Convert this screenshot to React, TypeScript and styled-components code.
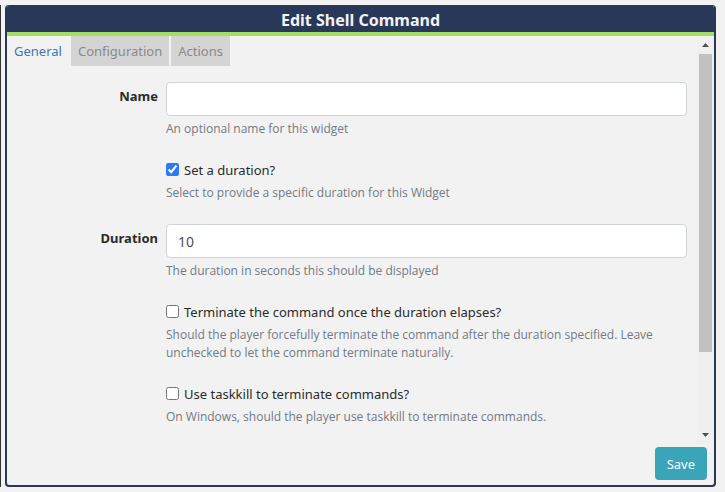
import React, { useState } from "react";
import styled, { createGlobalStyle } from "styled-components";

const GlobalStyle = createGlobalStyle`
  *, *::before, *::after { box-sizing: border-box; }
  body {
    margin: 0;
    background: #f2f2f2;
    color: #2b2b2b;
    font: 13px/20px "Noto Sans", "Open Sans", sans-serif;
  }
`;

const Page = styled.div`
  display: flex;
  gap: 4px;
  padding: 5px 9px 5px 0;
`;

const NeighbourEdge = styled.div`
  width: 1px;
  flex: none;
  background: #333;
`;

const Panel = styled.form`
  flex: 1;
  min-width: 0;
  border: 2px solid #293858;
  border-top: 0;
  border-radius: 4px;
  overflow: hidden;
`;

const Title = styled.h1`
  margin: 0;
  padding-bottom: 1px;
  padding-top: 5px;
  background: #293858;
  color: #f2f2f2;
  font-size: 16px;
  font-weight: 700;
  line-height: 21px;
  text-align: center;
`;

const Body = styled.div`
  display: flex;
  border-top: 4px solid #a6dd66;
`;

const Content = styled.div`
  flex: 1;
  min-width: 0;
  padding-bottom: 18px;
`;

const Tabs = styled.nav`
  display: flex;
  gap: 2px;
  margin-bottom: 16px;
`;

const Tab = styled.a<{ $active?: boolean }>`
  padding: 5px 7px;
  background: ${(p) => (p.$active ? "transparent" : "#d4d4d4")};
  color: ${(p) => (p.$active ? "#3c78b4" : "#8a8a8a")};
  text-decoration: none;
`;

const Fields = styled.div`
  display: grid;
  gap: 22px;
  padding-right: 10px;
`;

const Row = styled.div`
  display: grid;
  grid-template-columns: 151px 1fr;
  column-gap: 8px;
`;

const Label = styled.label`
  padding-top: 4px;
  font-weight: 700;
  text-align: right;
`;

const Control = styled.div`
  grid-column: 2;
  min-width: 0;
`;

const TextInput = styled.input`
  display: block;
  width: 100%;
  height: 34px;
  padding: 0 11px;
  border: 1px solid #ced4da;
  border-radius: 4px;
  background: #fff;
  color: #495057;
  font: inherit;
  font-size: 14px;
`;

const CheckLabel = styled.label`
  display: flex;
  align-items: center;
  gap: 5px;
`;

const CheckBox = styled.input`
  width: 13px;
  height: 13px;
  margin: 0 0 2px;
  accent-color: #2b7bf6;
`;

const Help = styled.p`
  margin: 4px 0 0;
  color: #727a82;
  font-family: "Open Sans", "Noto Sans", sans-serif;
  font-size: 12px;
  line-height: 18px;
`;

const ScrollBar = styled.div`
  display: flex;
  flex-direction: column;
  align-items: center;
  width: 17px;
  flex: none;
  background: #f0f0f0;
`;

const Arrow = styled.svg`
  display: block;
  width: 17px;
  height: 18px;
  flex: none;
  fill: #505050;
`;

const Track = styled.div`
  flex: 1;
  width: 13px;
`;

const Thumb = styled.div`
  height: 80%;
  background: #c1c1c1;
`;

const Footer = styled.footer`
  display: flex;
  justify-content: flex-end;
  padding: 3px 7px 5px;
`;

const SaveButton = styled.button`
  height: 33px;
  padding: 0 12px;
  border: 0;
  border-radius: 4px;
  background: #3aa5b8;
  color: #fff;
  font: inherit;
`;

type FieldProps = { id: string; label: string; help: string; value?: string };

function TextField({ id, label, help, value = "" }: FieldProps) {
  const [text, setText] = useState(value);
  return (
    <Row>
      <Label htmlFor={id}>{label}</Label>
      <Control>
        <TextInput id={id} type="text" value={text} onChange={(e) => setText(e.target.value)} />
        <Help>{help}</Help>
      </Control>
    </Row>
  );
}

type CheckProps = { id: string; label: string; help: string; checked?: boolean };

function CheckField({ id, label, help, checked }: CheckProps) {
  return (
    <Row>
      <Control>
        <CheckLabel htmlFor={id}>
          <CheckBox id={id} type="checkbox" defaultChecked={checked} />
          {label}
        </CheckLabel>
        <Help>{help}</Help>
      </Control>
    </Row>
  );
}

export default function App() {
  return (
    <>
      <GlobalStyle />
      <Page>
        <NeighbourEdge />
        <Panel onSubmit={(e) => e.preventDefault()}>
          <Title>Edit Shell Command</Title>
          <Body>
            <Content>
              <Tabs>
                <Tab href="#general" $active>General</Tab>
                <Tab href="#configuration">Configuration</Tab>
                <Tab href="#actions">Actions</Tab>
              </Tabs>
              <Fields>
                <TextField id="name" label="Name" help="An optional name for this widget" />
                <CheckField
                  id="useDuration"
                  label="Set a duration?"
                  help="Select to provide a specific duration for this Widget"
                  checked
                />
                <TextField
                  id="duration"
                  label="Duration"
                  value="10"
                  help="The duration in seconds this should be displayed"
                />
                <CheckField
                  id="terminate"
                  label="Terminate the command once the duration elapses?"
                  help="Should the player forcefully terminate the command after the duration specified. Leave unchecked to let the command terminate naturally."
                />
                <CheckField
                  id="taskkill"
                  label="Use taskkill to terminate commands?"
                  help="On Windows, should the player use taskkill to terminate commands."
                />
              </Fields>
            </Content>
            <ScrollBar aria-hidden="true">
              <Arrow viewBox="0 0 17 18"><path d="M5 11L8.500 7L12 11Z" /></Arrow>
              <Track><Thumb /></Track>
              <Arrow viewBox="0 0 17 18"><path d="M5 7L8.500 11L12 7Z" /></Arrow>
            </ScrollBar>
          </Body>
          <Footer>
            <SaveButton type="submit">Save</SaveButton>
          </Footer>
        </Panel>
      </Page>
    </>
  );
}
